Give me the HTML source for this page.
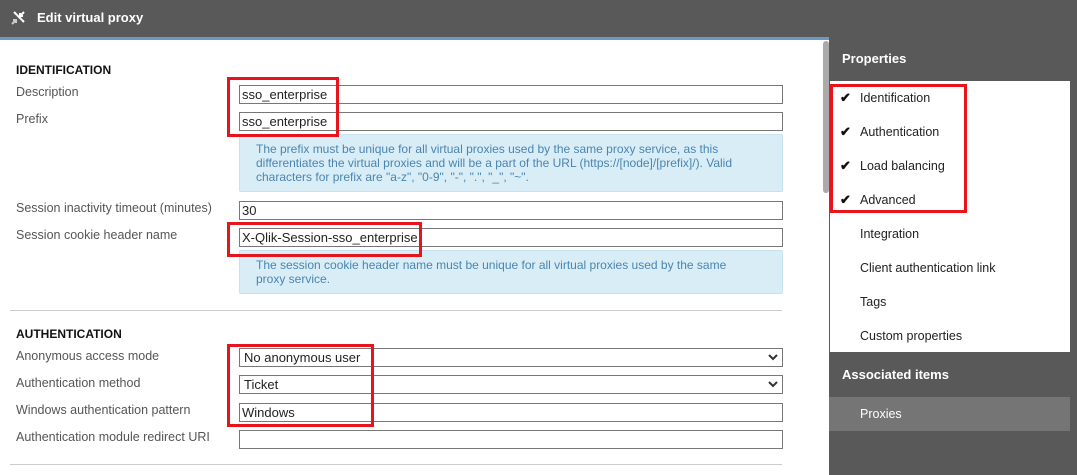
<!DOCTYPE html>
<html><head><meta charset="utf-8"><style>
*{margin:0;padding:0;box-sizing:border-box}
body{width:1077px;height:475px;overflow:hidden;background:#fff;font-family:"Liberation Sans",sans-serif;position:relative;color:#404040}
.a{position:absolute}
.top{left:0;top:0;width:1077px;height:37px;background:#595959}
.blue{left:0;top:37px;width:829px;height:3px;background:#6b98c4}
.title{left:37px;top:10px;color:#fff;font-weight:bold;font-size:13px}
.lbl{left:16px;font-size:12.5px;color:#555}
.hdr{left:16px;font-size:12px;font-weight:bold;color:#111}
.inp{left:239px;width:544px;height:19px;border:1px solid #777;font-size:13px;color:#222;padding-left:2px;line-height:17px;background:#fff}
.info{left:239px;width:544px;background:#d9edf7;border:1px solid #c6e2ef;border-radius:2px;color:#4a85b0;font-size:12px;line-height:14px;padding:7px 0 0 16px}
.red{border:3px solid #e8141b}
.sep{left:10px;width:772px;height:1px;background:#ccc}
.chev{position:absolute;right:4px;top:5px}
.rp{left:829px;top:37px;width:248px;height:438px;background:#595959}
.wl{left:830px;top:81px;width:240px;height:271px;background:#fff}
.it{left:860px;font-size:12.5px;color:#222}
.ck{left:840px;font-size:13px;color:#111;font-weight:bold}
</style></head><body>
<div class="a top"></div>
<div class="a blue"></div>
<svg class="a" style="left:10px;top:10px" width="16" height="16" viewBox="0 0 16 16"><g stroke="#fff" stroke-width="2" fill="none"><path d="M4 2l10 10M14 2l-4 4M10 3v3h3"/><path d="M2 14l4-4M3 10h3v3" stroke="#ccc"/></g></svg>
<div class="a title">Edit virtual proxy</div>
<div class="a" style="left:822px;top:40px;width:7px;height:435px;background:#fff"></div>
<div class="a" style="left:823px;top:41px;width:6px;height:152px;background:#aaa;border-radius:3px"></div>

<div class="a hdr" style="top:63px">IDENTIFICATION</div>
<div class="a lbl" style="top:85px">Description</div>
<div class="a lbl" style="top:112px">Prefix</div>
<div class="a inp" style="top:85px">sso_enterprise</div>
<div class="a inp" style="top:112px">sso_enterprise</div>
<div class="a info" style="top:134px;height:58px">The prefix must be unique for all virtual proxies used by the same proxy service, as this<br>differentiates the virtual proxies and will be a part of the URL (https://[node]/[prefix]/). Valid<br>characters for prefix are "a-z", "0-9", "-", ".", "_", "~".</div>
<div class="a lbl" style="top:201px">Session inactivity timeout (minutes)</div>
<div class="a lbl" style="top:228px">Session cookie header name</div>
<div class="a inp" style="top:201px">30</div>
<div class="a inp" style="top:228px">X-Qlik-Session-sso_enterprise</div>
<div class="a info" style="top:250px;height:44px">The session cookie header name must be unique for all virtual proxies used by the same<br>proxy service.</div>
<div class="a sep" style="top:310px"></div>

<div class="a hdr" style="top:327px">AUTHENTICATION</div>
<div class="a lbl" style="top:349px">Anonymous access mode</div>
<div class="a lbl" style="top:376px">Authentication method</div>
<div class="a lbl" style="top:403px">Windows authentication pattern</div>
<div class="a lbl" style="top:430px">Authentication module redirect URI</div>
<div class="a inp" style="top:348px;padding-left:4px">No anonymous user<svg class="chev" width="10" height="7" viewBox="0 0 10 7"><path d="M1 1l4 4 4-4" stroke="#333" stroke-width="2" fill="none"/></svg></div>
<div class="a inp" style="top:375px;padding-left:4px">Ticket<svg class="chev" width="10" height="7" viewBox="0 0 10 7"><path d="M1 1l4 4 4-4" stroke="#333" stroke-width="2" fill="none"/></svg></div>
<div class="a inp" style="top:403px">Windows</div>
<div class="a inp" style="top:430px"></div>
<div class="a sep" style="top:464px"></div>

<div class="a red" style="left:227px;top:77px;width:112px;height:60px"></div>
<div class="a red" style="left:227px;top:222px;width:195px;height:35px"></div>
<div class="a red" style="left:227px;top:344px;width:147px;height:83px"></div>

<div class="a rp"></div>
<div class="a" style="left:842px;top:51px;color:#fff;font-weight:bold;font-size:13px">Properties</div>
<div class="a wl"></div>
<div class="a ck" style="top:90px">✔</div><div class="a it" style="top:91px">Identification</div>
<div class="a ck" style="top:124px">✔</div><div class="a it" style="top:125px">Authentication</div>
<div class="a ck" style="top:158px">✔</div><div class="a it" style="top:159px">Load balancing</div>
<div class="a ck" style="top:192px">✔</div><div class="a it" style="top:193px">Advanced</div>
<div class="a it" style="top:227px">Integration</div>
<div class="a it" style="top:261px">Client authentication link</div>
<div class="a it" style="top:295px">Tags</div>
<div class="a it" style="top:329px">Custom properties</div>
<div class="a red" style="left:830px;top:84px;width:137px;height:129px"></div>
<div class="a" style="left:842px;top:367px;color:#fff;font-weight:bold;font-size:13px">Associated items</div>
<div class="a" style="left:829px;top:397px;width:241px;height:34px;background:#757575"></div>
<div class="a it" style="top:407px;color:#fff">Proxies</div>
</body></html>
